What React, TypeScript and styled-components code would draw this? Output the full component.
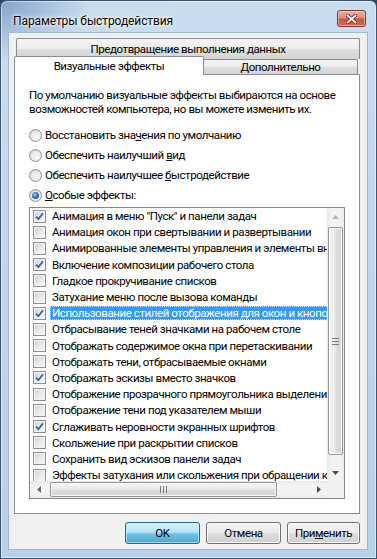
import React from 'react';
import styled, { createGlobalStyle } from 'styled-components';

const GlobalStyle = createGlobalStyle`
  html, body { margin: 0; padding: 0; background: #34495f; }
  body {
    font-family: Roboto, "Liberation Sans", Arial, sans-serif;
    font-size: 11.5px;
    letter-spacing: -0.42px;
    color: #000;
  }
  #root { width: 377px; height: 559px; }
`;

const Window = styled.div`
  box-sizing: border-box;
  width: 377px;
  height: 559px;
  display: flex;
  flex-direction: column;
  border: 1px solid #3c5472;
  border-radius: 7px 7px 0 0;
  background:
    radial-gradient(ellipse 90px 60px at 0 0, rgba(70, 120, 175, 0.55), rgba(70, 120, 175, 0) 100%),
    linear-gradient(180deg, #cadcef 0%, #c1d6ec 50%, #b9d0e9 100%);
  box-shadow: inset 0 0 0 1px rgba(255, 255, 255, 0.5);
`;

const TitleBar = styled.div`
  height: 31px;
  flex: none;
  display: flex;
  align-items: flex-start;
  justify-content: space-between;
  padding: 0 10px 0 12px;
`;

const Title = styled.div`
  margin-top: 13px;
  line-height: 14px;
  font-size: 12px;
  letter-spacing: -0.1px;
  color: #000;
  text-shadow: 0 0 6px #fff, 0 0 3px #fff, 0 0 1px #fff;
`;

const CloseButton = styled.div`
  box-sizing: border-box;
  margin-top: 9px;
  width: 29px;
  height: 17px;
  border: 1px solid #7e3428;
  border-radius: 3px;
  background: linear-gradient(180deg, #eab1a4 0%, #d98a78 45%, #c8533b 55%, #d46c52 100%);
  box-shadow: inset 0 0 0 1px rgba(255, 220, 210, 0.55);
  display: flex;
  align-items: center;
  justify-content: center;
`;

const Client = styled.div`
  flex: 1;
  min-height: 0;
  margin: 0 8px 8px 7px;
  border: 1px solid #a3b7cd;
  background: #f0f0f0;
  display: flex;
  flex-direction: column;
  padding: 5px 7px 5px 5px;
`;

const tabBg = `linear-gradient(180deg, #f4f4f4 0%, #ececec 48%, #dedede 52%, #d4d4d4 100%)`;

const BackTab = styled.div`
  box-sizing: border-box;
  height: 21px;
  flex: none;
  margin-left: 2px;
  border: 1px solid #898c95;
  border-bottom: none;
  border-radius: 2px 2px 0 0;
  background: ${tabBg};
  text-align: center;
  padding-top: 3px;
  line-height: 14px;
`;

const FrontRow = styled.div`
  display: flex;
  flex: none;
  align-items: flex-end;
  margin-top: -3px;
  margin-bottom: -1px;
  position: relative;
  z-index: 1;
`;

const Tab = styled.div<{ $active?: boolean; $w: number }>`
  box-sizing: border-box;
  width: ${(p) => p.$w}px;
  height: ${(p) => (p.$active ? 19 : 15)}px;
  margin-bottom: ${(p) => (p.$active ? 0 : 1)}px;
  margin-left: ${(p) => (p.$active ? 0 : -1)}px;
  border: 1px solid #898c95;
  border-bottom: none;
  border-radius: 2px 2px 0 0;
  background: ${(p) => (p.$active ? '#fff' : tabBg)};
  text-align: center;
  line-height: 14px;
  padding-top: ${(p) => (p.$active ? 2 : 0)}px;
  position: relative;
  z-index: ${(p) => (p.$active ? 2 : 1)};
`;

const Panel = styled.div`
  flex: 1;
  min-height: 0;
  background: #fff;
  border: 1px solid #898c95;
  padding: 13px 14px 14px 14px;
  display: flex;
  flex-direction: column;
`;

const Description = styled.p`
  margin: 0;
  line-height: 14px;
  white-space: nowrap;
`;

const RadioGroup = styled.div`
  margin-top: 9px;
  display: flex;
  flex-direction: column;
`;

const RadioRow = styled.div`
  height: 20px;
  display: flex;
  align-items: center;
  gap: 3px;
  white-space: nowrap;
`;

const RadioCircle = styled.span<{ $checked?: boolean }>`
  box-sizing: border-box;
  width: 13px;
  height: 13px;
  flex: none;
  border-radius: 50%;
  border: 1px solid #8d8f93;
  background: radial-gradient(circle at 60% 65%, #fbfbfb 0%, #e6e6e6 55%, #c9c9c9 100%);
  display: flex;
  align-items: center;
  justify-content: center;
  &::after {
    content: '';
    display: ${(p) => (p.$checked ? 'block' : 'none')};
    width: 7px;
    height: 7px;
    border-radius: 50%;
    background: radial-gradient(circle at 40% 35%, #9fd0f2 0%, #3a73b5 45%, #17386c 100%);
  }
`;

const AccessKey = styled.span`
  text-decoration: underline;
`;

const ListBox = styled.div`
  margin-top: 2px;
  flex: 1;
  min-height: 0;
  border: 1px solid #828790;
  background: #fff;
  display: grid;
  grid-template-columns: 1fr 17px;
  grid-template-rows: 1fr 17px;
  overflow: hidden;
`;

const Items = styled.div`
  overflow: hidden;
  min-width: 0;
`;

const ItemRow = styled.div`
  height: 16.2px;
  display: flex;
  align-items: center;
  padding-left: 3px;
  white-space: nowrap;
`;

const CheckBox = styled.span`
  box-sizing: border-box;
  width: 13px;
  height: 13px;
  flex: none;
  margin-right: 4px;
  border: 1px solid #8e8f8f;
  background: linear-gradient(135deg, #cfd2d6 0%, #e9eaec 55%, #f8f8f8 100%);
  box-shadow: inset 0 0 0 1px #f5f5f5;
  display: flex;
  align-items: center;
  justify-content: center;
`;

const ItemLabel = styled.span<{ $selected?: boolean }>`
  padding: 0 2px;
  line-height: 14px;
  background: ${(p) => (p.$selected ? '#3399ff' : 'transparent')};
  color: ${(p) => (p.$selected ? '#fff' : '#000')};
  outline: ${(p) => (p.$selected ? '1px dotted rgba(255,255,255,0.7)' : 'none')};
  outline-offset: -1px;
`;

const VScroll = styled.div`
  display: flex;
  flex-direction: column;
  background: linear-gradient(90deg, #e6e6e6 0%, #f3f3f3 25%, #f3f3f3 75%, #eaeaea 100%);
`;

const HScroll = styled.div`
  display: flex;
  background: linear-gradient(180deg, #e6e6e6 0%, #f3f3f3 25%, #f3f3f3 75%, #eaeaea 100%);
`;

const ArrowButton = styled.div`
  width: 17px;
  height: 17px;
  flex: none;
  display: flex;
  align-items: center;
  justify-content: center;
`;

const VTrack = styled.div`
  flex: 1;
  padding-top: 2px;
`;

const HTrack = styled.div`
  flex: 1;
  padding-left: 3px;
  display: flex;
  align-items: stretch;
`;

const Thumb = styled.div<{ $vertical?: boolean; $len: number }>`
  box-sizing: border-box;
  ${(p) =>
    p.$vertical
      ? `height: ${p.$len}px; margin: 0 1px;
         background: linear-gradient(90deg, #f4f4f4 0%, #ebebeb 45%, #dcdcdc 55%, #d6d6d6 100%);`
      : `width: ${p.$len}px; margin: 1px 0;
         background: linear-gradient(180deg, #f4f4f4 0%, #ebebeb 45%, #dcdcdc 55%, #d6d6d6 100%);`}
  border: 1px solid #979797;
  border-radius: 2px;
  box-shadow: inset 0 0 0 1px rgba(255, 255, 255, 0.8);
  display: flex;
  align-items: center;
  justify-content: center;
`;

const Corner = styled.div`
  background: #f0f0f0;
`;

const ButtonRow = styled.div`
  margin-top: 8px;
  flex: none;
  display: flex;
  justify-content: flex-end;
  gap: 6px;
`;

const Button = styled.div<{ $default?: boolean; $w: number }>`
  box-sizing: border-box;
  width: ${(p) => p.$w}px;
  height: 22px;
  border-radius: 3px;
  border: 1px solid ${(p) => (p.$default ? '#2a6590' : '#707070')};
  background: ${(p) =>
    p.$default
      ? 'linear-gradient(180deg, #d9f1fb 0%, #b6e2f5 45%, #72c2e3 55%, #4aa7d2 100%)'
      : 'linear-gradient(180deg, #f2f2f2 0%, #ebebeb 48%, #dddddd 52%, #cfcfcf 100%)'};
  box-shadow: inset 0 0 0 1px ${(p) => (p.$default ? 'rgba(200,240,255,0.7)' : '#fbfbfb')};
  display: flex;
  align-items: center;
  justify-content: center;
  line-height: 14px;
`;

const Check = () => (
  <svg width="9" height="9" viewBox="0 0 9 9">
    <path d="M1 4.6 L3.4 7.2 L8 1.2" fill="none" stroke="#3d5fa3" strokeWidth="1.8" strokeLinejoin="round" />
  </svg>
);

const Arrow = ({ dir, color }: { dir: 'up' | 'down' | 'left' | 'right'; color: string }) => {
  const pts: Record<string, string> = {
    up: '0,4 3.5,0 7,4',
    down: '0,0 7,0 3.5,4',
    left: '4,0 4,7 0,3.5',
    right: '0,0 4,3.5 0,7',
  };
  const vertical = dir === 'up' || dir === 'down';
  return (
    <svg width={vertical ? 7 : 4} height={vertical ? 4 : 7} viewBox={vertical ? '0 0 7 4' : '0 0 4 7'}>
      <polygon points={pts[dir]} fill={color} />
    </svg>
  );
};

const GripV = () => (
  <svg width="7" height="7" viewBox="0 0 7 7">
    {[0, 3, 6].map((y) => (
      <rect key={y} x="0" y={y} width="7" height="1" fill="#7a7a7a" />
    ))}
  </svg>
);

const GripH = () => (
  <svg width="7" height="7" viewBox="0 0 7 7">
    {[0, 3, 6].map((x) => (
      <rect key={x} x={x} y="0" width="1" height="7" fill="#7a7a7a" />
    ))}
  </svg>
);

const items: { text: string; checked?: boolean; selected?: boolean }[] = [
  { text: 'Анимация в меню "Пуск" и панели задач', checked: true },
  { text: 'Анимация окон при свертывании и развертывании' },
  { text: 'Анимированные элементы управления и элементы внутри окна' },
  { text: 'Включение композиции рабочего стола', checked: true },
  { text: 'Гладкое прокручивание списков' },
  { text: 'Затухание меню после вызова команды' },
  { text: 'Использование стилей отображения для окон и кнопок', checked: true, selected: true },
  { text: 'Отбрасывание теней значками на рабочем столе' },
  { text: 'Отображать содержимое окна при перетаскивании' },
  { text: 'Отображать тени, отбрасываемые окнами' },
  { text: 'Отображать эскизы вместо значков', checked: true },
  { text: 'Отображение прозрачного прямоугольника выделения' },
  { text: 'Отображение тени под указателем мыши' },
  { text: 'Сглаживать неровности экранных шрифтов', checked: true },
  { text: 'Скольжение при раскрытии списков' },
  { text: 'Сохранить вид эскизов панели задач' },
  { text: 'Эффекты затухания или скольжения при обращении к меню' },
];

export default function App() {
  return (
    <>
      <GlobalStyle />
      <Window>
        <TitleBar>
          <Title>Параметры быстродействия</Title>
          <CloseButton>
            <svg width="11" height="10" viewBox="0 0 11 10">
              <path d="M1.5 1.5 L9.5 8.5 M9.5 1.5 L1.5 8.5" stroke="#5a1a10" strokeWidth="3.2" strokeLinecap="square" />
              <path d="M1.5 1.5 L9.5 8.5 M9.5 1.5 L1.5 8.5" stroke="#fff" strokeWidth="1.8" strokeLinecap="square" />
            </svg>
          </CloseButton>
        </TitleBar>
        <Client>
          <BackTab>Предотвращение выполнения данных</BackTab>
          <FrontRow>
            <Tab $active $w={190}>Визуальные эффекты</Tab>
            <Tab $w={155}>Дополнительно</Tab>
          </FrontRow>
          <Panel>
            <Description>
              По умолчанию визуальные эффекты выбираются на основе
              <br />
              возможностей компьютера, но вы можете изменить их.
            </Description>
            <RadioGroup>
              <RadioRow>
                <RadioCircle />
                <span>
                  Восстановить зна<AccessKey>ч</AccessKey>ения по умолчанию
                </span>
              </RadioRow>
              <RadioRow>
                <RadioCircle />
                <span>
                  Обеспечить наилучший <AccessKey>в</AccessKey>ид
                </span>
              </RadioRow>
              <RadioRow>
                <RadioCircle />
                <span>
                  Обеспечить наилучшее <AccessKey>б</AccessKey>ыстродействие
                </span>
              </RadioRow>
              <RadioRow>
                <RadioCircle $checked />
                <span>
                  <AccessKey>О</AccessKey>собые эффекты:
                </span>
              </RadioRow>
            </RadioGroup>
            <ListBox>
              <Items>
                {items.map((it) => (
                  <ItemRow key={it.text}>
                    <CheckBox>{it.checked && <Check />}</CheckBox>
                    <ItemLabel $selected={it.selected}>{it.text}</ItemLabel>
                  </ItemRow>
                ))}
              </Items>
              <VScroll>
                <ArrowButton>
                  <Arrow dir="up" color="#b4b4b4" />
                </ArrowButton>
                <VTrack>
                  <Thumb $vertical $len={228}>
                    <GripV />
                  </Thumb>
                </VTrack>
                <ArrowButton>
                  <Arrow dir="down" color="#4a4a4a" />
                </ArrowButton>
              </VScroll>
              <HScroll>
                <ArrowButton>
                  <Arrow dir="left" color="#6a6a6a" />
                </ArrowButton>
                <HTrack>
                  <Thumb $len={227}>
                    <GripH />
                  </Thumb>
                </HTrack>
                <ArrowButton>
                  <Arrow dir="right" color="#4a4a4a" />
                </ArrowButton>
              </HScroll>
              <Corner />
            </ListBox>
          </Panel>
          <ButtonRow>
            <Button $default $w={75}>OK</Button>
            <Button $w={75}>Отмена</Button>
            <Button $w={73}>
              При<AccessKey>м</AccessKey>енить
            </Button>
          </ButtonRow>
        </Client>
      </Window>
    </>
  );
}
